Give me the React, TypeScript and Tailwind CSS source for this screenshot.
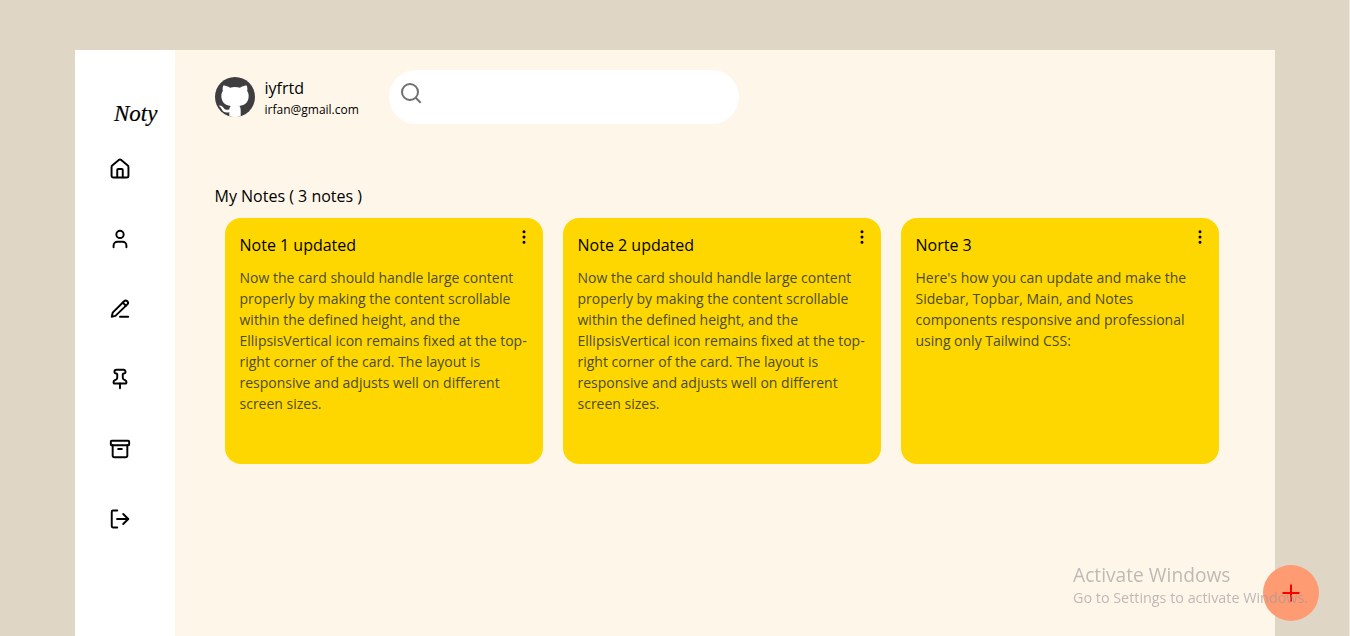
import type { ReactNode } from "react";
import { Archive, EllipsisVertical, Pin, User } from "lucide-react";

const longText =
  "Now the card should handle large content properly by making the content scrollable within the defined height, and the EllipsisVertical icon remains fixed at the top-right corner of the card. The layout is responsive and adjusts well on different screen sizes.";

const notes = [
  { title: "Note 1 updated", body: longText },
  { title: "Note 2 updated", body: longText },
  {
    title: "Norte 3",
    body: "Here's how you can update and make the Sidebar, Topbar, Main, and Notes components responsive and professional using only Tailwind CSS:",
  },
];

function Icon({ children }: { children: ReactNode }) {
  return (
    <svg width="22" height="22" viewBox="0 0 24 24" fill="none" stroke="currentColor" strokeWidth="2.1" strokeLinecap="round" strokeLinejoin="round">
      {children}
    </svg>
  );
}

function Sidebar() {
  return (
    <aside className="flex w-[100px] shrink-0 flex-col bg-white pt-[46px]">
      <div className="h-[37px] pl-[39px] font-['Liberation_Serif',serif] text-[23px] leading-[36px] italic [-webkit-text-stroke:0.2px_black]">
        Noty
      </div>
      <nav className="flex flex-col gap-12 pt-[25px] pl-[34px]">
        <Icon>
          <path d="M9 21v-8a1 1 0 0 1 1-1h4a1 1 0 0 1 1 1v8" />
          <path d="M2.800 9.700a2 2 0 0 1 .7-1.500l7.200-6a2 2 0 0 1 2.600 0l7.200 6a2 2 0 0 1 .7 1.500V19.300a2 2 0 0 1-2 2H4.800a2 2 0 0 1-2-2z" />
        </Icon>
        <User size={22} strokeWidth={2.1} />
        <Icon>
          <path d="M12 20.500h9" />
          <path d="M16.500 3.500a2.120 2.120 0 0 1 3.500 3.500L7 19.500l-4 1 1-4.500Z" />
          <path d="m15 5 3.500 3.500" />
        </Icon>
        <Pin size={22} strokeWidth={2.1} />
        <Archive size={22} strokeWidth={2.1} />
        <Icon>
          <path d="M9 2.800H4.300A1.300 1.300 0 0 0 3 4.100v15.800a1.300 1.300 0 0 0 1.300 1.300H9" />
          <path d="M8.800 12H21" />
          <path d="m15.500 6.500 5.500 5.500-5.500 5.500" />
        </Icon>
      </nav>
    </aside>
  );
}

function Topbar() {
  return (
    <header className="flex h-[54px] items-center">
      <svg width="40" height="40" viewBox="0 0 40 40" className="shrink-0">
        <circle cx="20" cy="20" r="20" fill="#3e3e40" />
        <path
          fill="#fff"
          d="M8.300 8.600C10 8.200 12.700 9.300 15 10.700c3.300-.8 6.700-.8 10 0 2.300-1.400 5-2.500 6.700-2.100.9 2 .8 4.200.4 5.400 1.300 1.600 1.700 3.500 1.500 6-.4 5.400-3.500 8.200-9.300 9 1 1.100 1.400 2.400 1.400 4.400V39.200a20 20 0 0 1-11.400 0V35.300c-4.400.8-6.300-.4-7.500-3.100-.6-1.300-1.300-2.100-2.300-2.800-.7-.6-.2-1 .5-1 1.500 0 2.600 1 3.500 2.400 1.400 2.200 3.200 2.500 5.700 1.600.2-1.400.7-2.500 1.500-3.400-5.700-.8-8.800-3.500-9.300-9-.2-2.500.2-4.400 1.500-6-.4-1.200-.5-3.400.4-5.400z"
        />
      </svg>
      <div className="ml-[9.500px] w-[124.500px] pt-px">
        <p className="text-[16px] leading-6">iyfrtd</p>
        <p className="text-[12px] leading-[19px]">irfan@gmail.com</p>
      </div>
      <div className="h-[54px] w-[350px] rounded-full bg-white pt-[11px] pl-[10px] text-[#707070]">
        <svg width="24" height="24" viewBox="0 0 24 24" fill="none" stroke="currentColor" strokeWidth="2">
          <circle cx="11" cy="11" r="8" />
          <path d="m16.700 16.700 5 5" />
        </svg>
      </div>
    </header>
  );
}

function NoteCard({ title, body }: { title: string; body: string }) {
  return (
    <article className="relative h-[246px] w-[318px] rounded-[16px] bg-[#ffd700] pt-[15px] pr-[15px] pl-[14.500px]">
      <EllipsisVertical size={18} className="absolute top-[10px] right-[10px]" />
      <h2 className="text-[16px] leading-6">{title}</h2>
      <p className="mt-[10px] text-[14px] leading-[21px] text-[#4b4b28]">{body}</p>
    </article>
  );
}

export default function App() {
  return (
    <div className="h-[636px] overflow-hidden border-r border-[#ede7dd] bg-[#dfd6c5] pt-[50px] pr-[74px] pl-[75px] font-['Open_Sans',sans-serif] text-black">
      <div className="flex h-[586px] w-[1200px]">
        <Sidebar />
        <main className="flex-1 bg-[#fff6ea] px-10 pt-5">
          <Topbar />
          <h1 className="mt-[60px] -ml-[0.5px] text-[16px] leading-6">My Notes ( 3 notes )</h1>
          <section className="mt-[10px] ml-[10px] flex gap-5">
            {notes.map((note) => (
              <NoteCard key={note.title} title={note.title} body={note.body} />
            ))}
          </section>
        </main>
      </div>
      <button className="fixed top-[565px] left-[1263px] flex size-14 items-center justify-center rounded-full bg-[#ff9b73] text-[#ff0000]">
        <svg width="18" height="18" viewBox="0 0 18 18" fill="none" stroke="currentColor" strokeWidth="2">
          <path d="M9 .5v17M.5 9h17" />
        </svg>
      </button>
      <div className="pointer-events-none fixed top-[562px] left-[1073px] whitespace-nowrap text-[#999999]/65">
        <p className="text-[19.200px] leading-[26px]">Activate Windows</p>
        <p className="text-[14.350px] leading-5">Go to Settings to activate Windows.</p>
      </div>
    </div>
  );
}
